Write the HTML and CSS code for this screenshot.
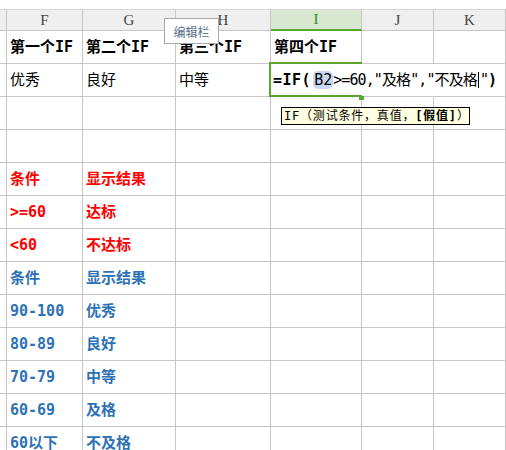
FILE: index.html
```html
<!DOCTYPE html>
<html lang="zh-CN">
<head>
<meta charset="utf-8">
<link rel="stylesheet" href="styles.css">
</head>
<body>
<div class="top"></div>
<div class="sheet">
  <div class="hd"></div><div class="hd">F</div><div class="hd">G</div><div class="hd">H</div><div class="hd active">I</div><div class="hd">J</div><div class="hd">K</div>

  <div class="c"></div><div class="c b">第一个IF</div><div class="c b">第二个IF</div><div class="c b">第三个IF</div><div class="c b">第四个IF</div><div class="c"></div><div class="c"></div>

  <div class="c"></div><div class="c">优秀</div><div class="c">良好</div><div class="c">中等</div>
  <div class="c sel"><span class="fx"><b class="op">=IF(</b><span class="ref">B2</span><span class="rest">&gt;=60,"及格","不及格<span class="caret"></span>"</span><b class="cp">)</b></span><span class="handle"></span></div>
  <div class="c spill"></div><div class="c"></div>

  <div class="c"></div><div class="c"></div><div class="c"></div><div class="c"></div><div class="c"></div><div class="c"></div><div class="c"></div>
  <div class="c"></div><div class="c"></div><div class="c"></div><div class="c"></div><div class="c"></div><div class="c"></div><div class="c"></div>

  <div class="c"></div><div class="c b red">条件</div><div class="c b red">显示结果</div><div class="c"></div><div class="c"></div><div class="c"></div><div class="c"></div>
  <div class="c"></div><div class="c b red">&gt;=60</div><div class="c b red">达标</div><div class="c"></div><div class="c"></div><div class="c"></div><div class="c"></div>
  <div class="c"></div><div class="c b red">&lt;60</div><div class="c b red">不达标</div><div class="c"></div><div class="c"></div><div class="c"></div><div class="c"></div>

  <div class="c"></div><div class="c b blue">条件</div><div class="c b blue">显示结果</div><div class="c"></div><div class="c"></div><div class="c"></div><div class="c"></div>
  <div class="c"></div><div class="c b blue">90-100</div><div class="c b blue">优秀</div><div class="c"></div><div class="c"></div><div class="c"></div><div class="c"></div>
  <div class="c"></div><div class="c b blue">80-89</div><div class="c b blue">良好</div><div class="c"></div><div class="c"></div><div class="c"></div><div class="c"></div>
  <div class="c"></div><div class="c b blue">70-79</div><div class="c b blue">中等</div><div class="c"></div><div class="c"></div><div class="c"></div><div class="c"></div>
  <div class="c"></div><div class="c b blue">60-69</div><div class="c b blue">及格</div><div class="c"></div><div class="c"></div><div class="c"></div><div class="c"></div>
  <div class="c"></div><div class="c b blue">60以下</div><div class="c b blue">不及格</div><div class="c"></div><div class="c"></div><div class="c"></div><div class="c"></div>
</div>

<div class="tip-edit">编辑栏</div>
<div class="tip-args">IF（测试条件，真值，<b>[假值]</b>）</div>
</body>
</html>
```

FILE: styles.css
```css
html, body {
  margin: 0;
  padding: 0;
}
body {
  width: 506px;
  height: 450px;
  overflow: hidden;
  position: relative;
  background: #fff;
  font-family: "DejaVu Sans Mono", "Noto Sans CJK SC", monospace;
}
.top {
  height: 9px;
}
.sheet {
  display: grid;
  grid-template-columns: 7px 76px 93px 95px 91px 72px 72px;
  grid-template-rows: 22px;
  grid-auto-rows: 33px;
}
.hd {
  box-sizing: border-box;
  border-top: 1px solid #d6d6d6;
  border-bottom: 1px solid #c6c6c6;
  border-right: 1px solid #c6c6c6;
  background: #efefef;
  display: flex;
  align-items: center;
  justify-content: center;
  font-family: "Liberation Serif", serif;
  font-size: 15px;
  color: #444;
}
.hd.active {
  background: #d8e7cf;
  border-bottom: 2px solid #5aa52e;
  color: #2f8a18;
}
.c {
  box-sizing: border-box;
  border-right: 1px solid #c6c6c6;
  border-bottom: 1px solid #c6c6c6;
  display: flex;
  align-items: center;
  padding: 0 2px 0 3px;
  font-size: 15px;
  line-height: 18px;
  white-space: nowrap;
  color: #000;
}
.b {
  font-weight: bold;
}
.red {
  color: #ff0000;
}
.blue {
  color: #2e72b6;
}
.sel {
  position: relative;
  z-index: 2;
  padding-left: 2px;
  border-right-color: transparent;
}
.sel::after {
  content: "";
  position: absolute;
  left: -2px;
  top: -2px;
  right: -1px;
  bottom: -1px;
  border: 2px solid #5aa52e;
  border-right: none;
  pointer-events: none;
}
.handle {
  position: absolute;
  right: -3px;
  bottom: -4px;
  width: 5px;
  height: 4px;
  background: #5aa52e;
  z-index: 3;
}
.spill {
  border-right-color: transparent;
}
.fx {
  display: inline-flex;
  align-items: center;
}
.op, .cp {
  font-weight: bold;
}
.op {
  letter-spacing: 0.5px;
}
.rest {
  letter-spacing: -0.9px;
  display: inline-flex;
  align-items: center;
}
.ref {
  background: #c9d8f2;
  border-radius: 5px;
  padding: 0 1px;
  margin-left: 2px;
}
.caret {
  display: inline-block;
  width: 1px;
  height: 16px;
  background: #000;
  margin: 0 1px;
}
.tip-edit {
  position: absolute;
  left: 164px;
  top: 18px;
  width: 55px;
  height: 26px;
  box-sizing: border-box;
  border: 1px solid #a8a8a8;
  background: #fff;
  color: #58708e;
  font-family: "Noto Sans CJK SC", sans-serif;
  font-size: 12px;
  display: flex;
  align-items: center;
  justify-content: center;
  z-index: 5;
}
.tip-args {
  position: absolute;
  left: 281px;
  top: 107px;
  width: 189px;
  height: 18px;
  box-sizing: border-box;
  border: 1px solid #000;
  background: #ffffe1;
  font-family: "DejaVu Sans Mono", "Noto Sans CJK SC", monospace;
  font-size: 12px;
  line-height: 16px;
  letter-spacing: 0.8px;
  padding: 0 2px;
  white-space: nowrap;
  color: #000;
  z-index: 5;
}
```
